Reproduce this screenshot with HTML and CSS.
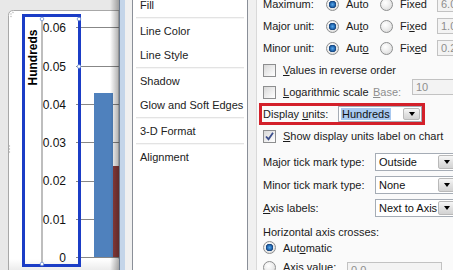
FILE: index.html
```html
<!DOCTYPE html>
<html lang="en">
<head>
    <meta charset="UTF-8">
    <meta name="viewport" content="width=device-width, initial-scale=1.0">
    <title>Format Axis - Display units</title>
    <link rel="stylesheet" href="styles.css">
</head>
<body>

<div class="screen">

    <!-- chart behind the dialog -->
    <div class="chart">
        <svg width="119" height="270" viewBox="0 0 119 270">
            <defs>
                <linearGradient id="edgeShade" x1="0" x2="1" y1="0" y2="0">
                    <stop offset="0" stop-color="#000" stop-opacity="0"/>
                    <stop offset="1" stop-color="#000" stop-opacity="0.32"/>
                </linearGradient>
                <linearGradient id="floorShade" x1="0" x2="0" y1="0" y2="1">
                    <stop offset="0" stop-color="#fff"/>
                    <stop offset="1" stop-color="#ececec"/>
                </linearGradient>
            </defs>
            <rect width="119" height="270" fill="#e8e8e8"/>
            <path d="M8.5 270 V15.5 Q8.5 10.5 13.5 10.5 H119 V270 Z" fill="#fff" stroke="#a8a8a8"/>
            <rect x="9" y="259" width="110" height="11" fill="url(#floorShade)"/>
            <g fill="#b4b4b4">
                <circle cx="11" cy="14" r="0.7"/><circle cx="13" cy="12.5" r="0.7"/><circle cx="11" cy="16.5" r="0.7"/>
                <circle cx="9.5" cy="146" r="0.7"/><circle cx="9.5" cy="149" r="0.7"/><circle cx="9.5" cy="152" r="0.7"/>
            </g>

            <!-- gridlines -->
            <g stroke="#878787" stroke-width="1">
                <line x1="76" y1="27.5" x2="119" y2="27.5"/>
                <line x1="76" y1="66.5" x2="119" y2="66.5"/>
                <line x1="76" y1="104.5" x2="119" y2="104.5"/>
                <line x1="76" y1="142.5" x2="119" y2="142.5"/>
                <line x1="76" y1="181.5" x2="119" y2="181.5"/>
                <line x1="76" y1="219.5" x2="119" y2="219.5"/>
                <line x1="76" y1="257.5" x2="119" y2="257.5"/>
            </g>

            <!-- bars -->
            <rect x="94" y="93" width="19" height="164" fill="#4f81bd"/>
            <rect x="113" y="166" width="6" height="91" fill="#8e3d3d"/>
            <rect x="110" y="0" width="9" height="270" fill="url(#edgeShade)"/>

            <!-- axis selection -->
            <line x1="42" y1="19" x2="42" y2="264" stroke="#a8a8a8" stroke-width="1.5"/>
            <rect x="23.5" y="15.5" width="56" height="250" fill="none" stroke="#1b3dc6" stroke-width="3"/>
            <g fill="#fff" stroke="#6f8fd0" stroke-width="0.8">
                <circle cx="42" cy="19" r="1.8"/>
                <circle cx="79" cy="19" r="1.8"/>
                <circle cx="42" cy="264" r="1.8"/>
                <circle cx="79" cy="66.5" r="1.8"/>
            </g>

            <g class="axis-labels" text-anchor="end">
                <text x="66" y="32">0.06</text>
                <text x="66" y="70.5">0.05</text>
                <text x="66" y="108.5">0.04</text>
                <text x="66" y="147">0.03</text>
                <text x="66" y="185">0.02</text>
                <text x="66" y="223.5">0.01</text>
                <text x="66" y="262">0</text>
            </g>
            <text class="axis-title" transform="translate(36.5 57.5) rotate(-90)" text-anchor="middle">Hundreds</text>
        </svg>
    </div>

    <!-- Format Axis dialog -->
    <div class="dialog">
        <div class="dialog-body">

            <ul class="nav">
                <li class="nav-item">Fill</li>
                <li class="nav-sep"></li>
                <li class="nav-item">Line Color</li>
                <li class="nav-item">Line Style</li>
                <li class="nav-sep"></li>
                <li class="nav-item">Shadow</li>
                <li class="nav-item">Glow and Soft Edges</li>
                <li class="nav-sep"></li>
                <li class="nav-item">3-D Format</li>
                <li class="nav-sep"></li>
                <li class="nav-item">Alignment</li>
            </ul>

            <div class="options">
                <div class="row">
                    <span class="lbl lbl-unit">Maximum:</span>
                    <span class="opt opt-auto"><span class="radio on"></span><span>Auto</span></span>
                    <span class="opt opt-fixed"><span class="radio"></span><span>Fixed</span></span>
                    <span class="field off">6.0</span>
                </div>
                <div class="row">
                    <span class="lbl lbl-unit">Major unit:</span>
                    <span class="opt opt-auto"><span class="radio on"></span><span>Au<u>t</u>o</span></span>
                    <span class="opt opt-fixed"><span class="radio"></span><span>Fi<u>x</u>ed</span></span>
                    <span class="field off">1.0</span>
                </div>
                <div class="row">
                    <span class="lbl lbl-unit">Minor unit:</span>
                    <span class="opt opt-auto"><span class="radio on"></span><span>Aut<u>o</u></span></span>
                    <span class="opt opt-fixed"><span class="radio"></span><span>Fix<u>e</u>d</span></span>
                    <span class="field off">0.2</span>
                </div>
                <div class="row">
                    <span class="check"></span>
                    <span><u>V</u>alues in reverse order</span>
                </div>
                <div class="row">
                    <span class="check"></span>
                    <span class="lbl-log"><u>L</u>ogarithmic scale</span>
                    <span class="lbl-base"><u>B</u>ase:</span>
                    <span class="field off field-base">10</span>
                </div>
                <div class="row row-marked">
                    <span class="lbl lbl-display">Display <u>u</u>nits:</span>
                    <span class="combo combo-display">
                        <span class="combo-text"><span class="picked">Hundreds</span></span>
                        <span class="combo-btn"><span class="arrow"></span></span>
                    </span>
                </div>
                <div class="row">
                    <span class="check on">
                        <svg width="11" height="11" viewBox="0 0 11 11"><path d="M2 5.5 L4.5 8.2 L9 1.8" fill="none" stroke="#3d4f8c" stroke-width="1.8"/></svg>
                    </span>
                    <span><u>S</u>how display units label on chart</span>
                </div>
                <div class="row row-select row-first-select">
                    <span class="lbl lbl-select">Major tick mark type:</span>
                    <span class="combo combo-wide">
                        <span class="combo-text">Outside</span>
                        <span class="combo-btn"><span class="arrow"></span></span>
                    </span>
                </div>
                <div class="row row-select">
                    <span class="lbl lbl-select">Minor tick mark type:</span>
                    <span class="combo combo-wide">
                        <span class="combo-text">None</span>
                        <span class="combo-btn"><span class="arrow"></span></span>
                    </span>
                </div>
                <div class="row row-select">
                    <span class="lbl lbl-select"><u>A</u>xis labels:</span>
                    <span class="combo combo-wide">
                        <span class="combo-text">Next to Axis</span>
                        <span class="combo-btn"><span class="arrow"></span></span>
                    </span>
                </div>
                <div class="row row-heading">Horizontal axis crosses:</div>
                <div class="row row-auto">
                    <span class="radio on"></span>
                    <span>Aut<u>o</u>matic</span>
                </div>
                <div class="row row-value">
                    <span class="radio"></span>
                    <span class="lbl-value">Axis value:</span>
                    <span class="field off field-value">0.0</span>
                </div>
            </div>

        </div>
    </div>

</div>

</body>
</html>
```

FILE: styles.css
```css
body {
    margin: 0;
    font-family: 'Liberation Sans', Arial, sans-serif;
    font-size: 11px;
    color: #1b1b1b;
    background-color: #e8e8e8;
}
.screen {
    display: flex;
    width: 453px;
    height: 270px;
    overflow: hidden;
}
.chart {
    flex: none;
    width: 119px;
    height: 270px;
}
.chart svg {
    display: block;
}
.axis-labels text {
    font-family: 'Liberation Sans', Arial, sans-serif;
    font-size: 12px;
    fill: #111;
}
.axis-title {
    font-family: 'Liberation Sans', Arial, sans-serif;
    font-size: 12px;
    font-weight: bold;
    fill: #000;
}

/* dialog frame */
.dialog {
    flex: 1;
    display: flex;
    border-left: 1px solid #6a798c;
    background-color: #c4d5e9;
    padding-left: 5px;
    min-width: 0;
}
.dialog-body {
    flex: 1;
    display: flex;
    background-color: #f0f0f0;
    padding-left: 7px;
    min-width: 0;
}

/* category list */
.nav {
    flex: none;
    width: 114px;
    margin: -7px 0 0 0;
    padding: 0;
    list-style: none;
    background-color: #fff;
    border-left: 1px solid #8a8f98;
    border-right: 1px solid #8a8f98;
}
.nav-item {
    height: 24px;
    line-height: 24px;
    padding-left: 7px;
    white-space: nowrap;
    color: #222;
}
.nav-sep {
    height: 0;
    margin: 0 3px;
    border-top: 1px solid #e3e3e3;
    border-bottom: 1px solid #f6f6f6;
}

/* options pane */
.options {
    flex: 1;
    margin-left: 8px;
    padding-left: 6px;
    background-color: #fafafa;
    border-left: 1px solid #d9d9d9;
    overflow: hidden;
    min-width: 0;
}
.options > .row:first-child {
    margin-top: -7px;
}
.row {
    display: flex;
    align-items: center;
    height: 22px;
    white-space: nowrap;
}
.lbl {
    flex: none;
}
.lbl-unit {
    width: 63px;
}
.opt {
    flex: none;
    display: flex;
    align-items: center;
    gap: 7px;
}
.opt-auto {
    width: 54px;
}
.opt-fixed {
    width: 57px;
}

/* radios and checkboxes */
.radio {
    flex: none;
    box-sizing: border-box;
    width: 13px;
    height: 13px;
    border: 1px solid #8d8e8f;
    border-radius: 50%;
    background: radial-gradient(circle at 40% 35%, #ffffff 0, #f2f2f2 35%, #d4d4d4 100%);
}
.radio.on {
    background:
        radial-gradient(circle at 50% 50%, #5aa7e6 0, #2a73bd 2px, #123f78 3.5px, transparent 4px),
        radial-gradient(circle at 40% 35%, #ffffff 0, #f2f2f2 35%, #d4d4d4 100%);
}
.check {
    flex: none;
    box-sizing: border-box;
    width: 13px;
    height: 13px;
    margin-right: 7px;
    border: 1px solid #8d8e8f;
    background: linear-gradient(135deg, #d8d8d8 0, #f4f4f4 70%, #fff 100%);
    display: flex;
    align-items: center;
    justify-content: center;
}
.check svg {
    display: block;
}
.row-auto .radio,
.row-value .radio {
    margin-right: 7px;
}

/* text fields */
.field {
    flex: none;
    box-sizing: border-box;
    width: 44px;
    height: 16px;
    line-height: 14px;
    padding-left: 3px;
    border: 1px solid #c2c2c2;
    background-color: #f3f3f3;
}
.off {
    color: #8e8e8e;
}
.lbl-log {
    flex: none;
    width: 90px;
}
.lbl-base {
    flex: none;
    width: 39px;
    color: #8e8e8e;
}
.field-base {
    width: 60px;
    margin-top: -10px;
}
.lbl-value {
    width: 64px;
}
.field-value {
    width: 95px;
    margin-top: 6px;
}

/* the highlighted display units row */
.row-marked {
    box-sizing: border-box;
    width: 166px;
    margin-left: -4px;
    padding-left: 1px;
    border: 3px solid #d3202a;
}
.lbl-display {
    width: 75px;
}

/* combo boxes */
.combo {
    flex: none;
    box-sizing: border-box;
    display: flex;
    align-items: stretch;
    border: 1px solid #a5acb5;
    background-color: #fff;
}
.combo-display {
    width: 84px;
    height: 16px;
}
.combo-wide {
    width: 82px;
    height: 18px;
}
.combo-text {
    flex: 1;
    display: flex;
    align-items: center;
    padding-left: 3px;
    color: #111;
}
.combo-display .combo-text {
    padding-left: 2px;
}
.picked {
    background-color: #a9c9f0;
    line-height: 12px;
    padding: 0 1px;
}
.combo-btn {
    flex: none;
    width: 15px;
    margin: 1px;
    border: 1px solid #b9b9b9;
    border-radius: 2px;
    background: linear-gradient(#f7f7f7, #e2e2e2 50%, #d3d3d3);
    display: flex;
    align-items: center;
    justify-content: center;
}
.arrow {
    width: 0;
    height: 0;
    border-left: 3.5px solid transparent;
    border-right: 3.5px solid transparent;
    border-top: 4px solid #000;
}
.lbl-select {
    width: 112px;
}
.row-select {
    height: 23px;
}
.row-first-select {
    margin-top: 3px;
}
.row-heading {
    height: 16px;
    margin-top: 5px;
}
.row-auto {
    height: 15px;
}
.row-value {
    height: 24px;
}
```
